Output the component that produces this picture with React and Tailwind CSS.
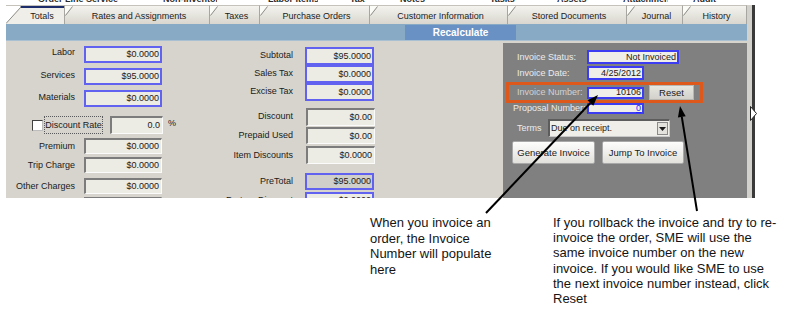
import React from "react";

const tabs = [
  { label: "Totals", w: "w-[59px]", first: true },
  { label: "Rates and Assignments", w: "w-[145px]" },
  { label: "Taxes", w: "w-[50px]" },
  { label: "Purchase Orders", w: "w-[110px]" },
  { label: "Customer Information", w: "w-[138px]" },
  { label: "Stored Documents", w: "w-[119px]" },
  { label: "Journal", w: "w-[56px]" },
  { label: "History", w: "w-[64px]" },
];

function DogEar({ first }) {
  if (first) {
    return (
      <svg className="absolute left-0 top-0" width="16" height="19" viewBox="0 0 16 19">
        <polygon points="0,0 15,0 0,17.5" fill="#ffffff" />
        <line x1="0" y1="17.5" x2="15" y2="1" stroke="#8e8c86" strokeWidth="1" />
      </svg>
    );
  }
  return (
    <svg className="absolute left-0 top-0" width="8" height="10" viewBox="0 0 8 10">
      <polygon points="0,0 7,0 0,9" fill="#fbfbf8" />
      <line x1="0.5" y1="9.5" x2="7.5" y2="0.5" stroke="#8e8c86" strokeWidth="1" />
    </svg>
  );
}

function BlueBox({ value, cls = "", bg = "bg-[#ecebe4]" }) {
  return (
    <div
      className={`${cls} ${bg} shrink-0 border-2 border-[#6262f0] flex items-center justify-end pr-[1px] text-[9px] leading-none text-[#1a1a1a]`}
    >
      {value}
    </div>
  );
}

function SunkenBox({ value, cls = "" }) {
  return (
    <div
      className={`${cls} shrink-0 bg-[#ecebe4] border-t-2 border-l-2 border-t-[#7c7c7c] border-l-[#7c7c7c] border-b border-r border-b-[#fbfbfb] border-r-[#fbfbfb] flex items-center justify-end pr-[2px] text-[9px] leading-none text-[#1a1a1a]`}
    >
      {value}
    </div>
  );
}

function PanelInput({ value, cls = "" }) {
  return (
    <div
      className={`${cls} shrink-0 bg-[#efeee8] border-2 border-[#3c3cf2] flex items-center justify-end pr-[1px] text-[9px] leading-none text-[#1a1a1a]`}
    >
      {value}
    </div>
  );
}

export default function App() {
  return (
    <div className="relative w-[800px] h-[323px] bg-white overflow-hidden font-['Liberation_Sans',Arial,sans-serif]">
      {/* clipped row of tabs above */}
      <div className="h-[5px] overflow-hidden flex text-[9px] text-[#2a2a2a] font-bold whitespace-nowrap">
        <span className="-mt-[7px] ml-[38px] w-[80px] overflow-hidden">Order Line Services</span>
        <span className="-mt-[7px] ml-[45px] w-[54px] overflow-hidden">Non-Inventory</span>
        <span className="-mt-[7px] ml-[51px] w-[50px] overflow-hidden">Labor Items</span>
        <span className="-mt-[7px] ml-[32px] w-[18px] overflow-hidden">Tax</span>
        <span className="-mt-[7px] ml-[32px] w-[37px] overflow-hidden">Notes</span>
        <span className="-mt-[7px] ml-[53px] w-[37px] overflow-hidden">Tasks</span>
        <span className="-mt-[7px] ml-[30px] w-[36px] overflow-hidden">Assets</span>
        <span className="-mt-[7px] ml-[30px] w-[45px] overflow-hidden">Attachment</span>
        <span className="-mt-[7px] ml-[25px] w-[37px] overflow-hidden">Audit</span>
      </div>

      {/* window */}
      <div className="flex h-[193px] pl-[6px]">
        <div className="w-[741px] flex flex-col">
          {/* tabs */}
          <div className="flex h-[19px] shrink-0">
            {tabs.map((t) => (
              <div
                key={t.label}
                className={`relative ${t.w} h-full shrink-0 border-r border-r-[#a8a6a0] border-t border-t-[#c4c2bb] ${
                  t.first ? "bg-[#efeee9] pl-[14px]" : "bg-linear-to-b from-[#f4f3ee] to-[#d8d6ce] pl-[4px]"
                } flex flex-col`}
              >
                <DogEar first={t.first} />
                {t.first ? (
                  <div className="h-[2px] bg-[#1d2c6b] shrink-0" />
                ) : (
                  <div className="h-[2px] shrink-0" />
                )}
                <div className="flex-1 flex items-center justify-center text-[9px] text-[#1c1c1c] leading-none">
                  {t.label}
                </div>
              </div>
            ))}
          </div>

          {/* blue bar */}
          <div className="h-[17px] shrink-0 bg-[#89aac5] border-b border-b-[#a9bfd2] flex items-start">
            <div className="ml-[399px] mt-[1px] w-[111px] h-[15px] bg-[#6a91c4] flex items-center justify-center text-[10px] font-bold text-white leading-none">
              Recalculate
            </div>
          </div>

          {/* content */}
          <div className="h-[157px] shrink-0 bg-[#d6d4cd] flex overflow-hidden">
            <div className="w-[497px] shrink-0 flex">
              {/* column 1 */}
              <div className="w-[170px] shrink-0 flex flex-col text-[9px] text-[#1a1a1a]">
                <div className="flex items-start mt-[5px]">
                  <div className="w-[69px] text-right leading-[12px]">Labor</div>
                  <BlueBox cls="ml-[9px] w-[78px] h-[17px]" value="$0.0000" />
                </div>
                <div className="flex items-start mt-[5px]">
                  <div className="w-[69px] text-right leading-[12px] mt-[1px]">Services</div>
                  <BlueBox cls="ml-[9px] w-[78px] h-[17px]" value="$95.0000" />
                </div>
                <div className="flex items-start mt-[5px]">
                  <div className="w-[69px] text-right leading-[12px] mt-[1px]">Materials</div>
                  <BlueBox cls="ml-[9px] w-[78px] h-[17px]" value="$0.0000" />
                </div>
                <div className="flex items-center mt-[9px] h-[18px]">
                  <div className="ml-[26px] w-[11px] h-[11px] bg-white border border-[#404040] border-b-[#bdbdbd] border-r-[#bdbdbd] shrink-0" />
                  <div className="ml-[1px] w-[59px] h-[18px] border border-dotted border-[#5a5a5a] flex items-center justify-center leading-none shrink-0">
                    Discount Rate
                  </div>
                  <SunkenBox cls="ml-[7px] w-[53px] h-[18px]" value="0.0" />
                  <div className="ml-[5px] leading-none -mt-[4px]">%</div>
                </div>
                <div className="flex items-center mt-[4px]">
                  <div className="w-[69px] text-right leading-[12px]">Premium</div>
                  <SunkenBox cls="ml-[9px] w-[78px] h-[16px]" value="$0.0000" />
                </div>
                <div className="flex items-center mt-[3px]">
                  <div className="w-[69px] text-right leading-[12px]">Trip Charge</div>
                  <SunkenBox cls="ml-[9px] w-[78px] h-[16px]" value="$0.0000" />
                </div>
                <div className="flex items-center mt-[5px]">
                  <div className="w-[69px] text-right leading-[12px]">Other Charges</div>
                  <SunkenBox cls="ml-[9px] w-[78px] h-[16px]" value="$0.0000" />
                </div>
                <div className="flex items-center mt-[3px]">
                  <div className="w-[69px] text-right leading-[12px]">Net Charges</div>
                  <SunkenBox cls="ml-[9px] w-[78px] h-[16px]" value="$0.0000" />
                </div>
              </div>

              {/* column 2 */}
              <div className="w-[210px] shrink-0 flex flex-col text-[9px] text-[#1a1a1a]">
                <div className="flex items-center mt-[6px]">
                  <div className="w-[117px] text-right leading-[12px] -mt-[2px]">Subtotal</div>
                  <BlueBox cls="ml-[12px] w-[69px] h-[18px]" value="$95.0000" />
                </div>
                <div className="flex items-center">
                  <div className="w-[117px] text-right leading-[12px] -mt-[2px]">Sales Tax</div>
                  <BlueBox cls="ml-[12px] w-[69px] h-[18px]" value="$0.0000" />
                </div>
                <div className="flex items-center">
                  <div className="w-[117px] text-right leading-[12px] -mt-[2px]">Excise Tax</div>
                  <BlueBox cls="ml-[12px] w-[69px] h-[18px]" value="$0.0000" />
                </div>
                <div className="flex items-center mt-[7px]">
                  <div className="w-[117px] text-right leading-[12px] -mt-[2px]">Discount</div>
                  <SunkenBox cls="ml-[13px] w-[69px] h-[18px]" value="$0.00" />
                </div>
                <div className="flex items-center mt-[1px]">
                  <div className="w-[117px] text-right leading-[12px] -mt-[2px]">Prepaid Used</div>
                  <SunkenBox cls="ml-[13px] w-[69px] h-[17px]" value="$0.00" />
                </div>
                <div className="flex items-center mt-[2px]">
                  <div className="w-[117px] text-right leading-[12px]">Item Discounts</div>
                  <SunkenBox cls="ml-[13px] w-[69px] h-[18px]" value="$0.0000" />
                </div>
                <div className="flex items-center mt-[9px]">
                  <div className="w-[117px] text-right leading-[12px] -mt-[2px]">PreTotal</div>
                  <BlueBox cls="ml-[12px] w-[69px] h-[17px]" bg="bg-[#d0cfc9]" value="$95.0000" />
                </div>
                <div className="flex items-center mt-[2px]">
                  <div className="w-[117px] text-right leading-[12px] -mt-[2px]">Partner Discount</div>
                  <BlueBox cls="ml-[12px] w-[69px] h-[17px]" value="$0.0000" />
                </div>
              </div>
            </div>

            {/* right panel */}
            <div className="w-[244px] shrink-0 mt-[2px] bg-[#808080] flex flex-col text-[9px] text-[#ececec]">
              <div className="flex items-center mt-[7px] h-[14px]">
                <div className="ml-[14px] w-[70px] leading-none">Invoice Status:</div>
                <PanelInput cls="w-[92px] h-[14px]" value="Not Invoiced" />
              </div>
              <div className="flex items-center mt-[2px] h-[14px]">
                <div className="ml-[14px] w-[70px] leading-none">Invoice Date:</div>
                <PanelInput cls="w-[57px] h-[14px]" value="4/25/2012" />
              </div>
              <div className="ml-[3px] mt-[2px] w-[197px] h-[21px] border-[3px] border-[#df581b] flex items-center">
                <div className="ml-[8px] w-[70px] leading-none text-[#d2d2d2]">Invoice Number:</div>
                <PanelInput cls="w-[57px] h-[12px]" value="10106" />
                <div className="ml-[5px] w-[45px] h-[15px] bg-linear-to-b from-[#e6e5df] to-[#d3d1ca] border border-[#b8b6b0] flex items-center justify-center text-[9.5px] text-[#1a1a1a] leading-none shrink-0">
                  Reset
                </div>
              </div>
              <div className="flex items-center h-[11px]">
                <div className="ml-[10px] w-[74px] leading-none whitespace-nowrap overflow-hidden">Proposal Number:</div>
                <div className="w-[57px] h-[11px] shrink-0 bg-[#efeee8] border-2 border-[#3c3cf2] flex items-center justify-end pr-[1px] text-[9px] leading-none text-[#2323ff] underline">
                  0
                </div>
              </div>
              <div className="flex items-center mt-[5px] h-[18px]">
                <div className="ml-[14px] w-[31px] leading-none">Terms</div>
                <div className="w-[122px] h-[18px] shrink-0 bg-[#efeee8] border-t-2 border-l-2 border-t-[#5c5c5c] border-l-[#5c5c5c] border-b border-r border-b-[#c8c8c8] border-r-[#c8c8c8] flex items-center">
                  <div className="flex-1 pl-[1px] text-[9px] leading-none text-[#1a1a1a]">Due on receipt.</div>
                  <div className="w-[11px] h-[13px] mr-[1px] bg-[#e4e2dc] border border-[#8a8a8a] flex items-center justify-center shrink-0">
                    <svg width="7" height="4" viewBox="0 0 7 4">
                      <polygon points="0,0 7,0 3.5,4" fill="#1a1a1a" />
                    </svg>
                  </div>
                </div>
              </div>
              <div className="flex mt-[4px] h-[23px]">
                <div className="ml-[9px] w-[83px] h-[23px] rounded-[2px] bg-linear-to-b from-[#fdfdfc] to-[#e2e1dc] border border-[#a8a8a8] flex items-center justify-center text-[9.5px] text-[#1a1a1a] leading-none shrink-0">
                  Generate Invoice
                </div>
                <div className="ml-[7px] w-[82px] h-[23px] rounded-[2px] bg-linear-to-b from-[#fdfdfc] to-[#e2e1dc] border border-[#a8a8a8] flex items-center justify-center text-[9.5px] text-[#1a1a1a] leading-none shrink-0">
                  Jump To Invoice
                </div>
              </div>
            </div>
          </div>
        </div>
        {/* right frame edge */}
        <div className="w-[5px] shrink-0 bg-[#d3d1cb]" />
        <div className="w-[3px] shrink-0 bg-[#3a3a3a]" />
      </div>

      {/* annotations */}
      <div className="flex pt-[17px] text-[13px] text-[#141414]">
        <div className="ml-[370px] w-[140px] leading-[15.5px]">
          When you invoice an
          <br />
          order, the Invoice
          <br />
          Number will populate
          <br />
          here
        </div>
        <div className="ml-[43px] w-[240px] leading-[15.2px]">
          If you rollback the invoice and try to re-
          <br />
          invoice the order, SME will use the
          <br />
          same invoice number on the new
          <br />
          invoice. If you would like SME to use
          <br />
          the next invoice number instead, click
          <br />
          Reset
        </div>
      </div>

      {/* arrows and mouse cursor overlay */}
      <svg className="absolute left-0 top-0 pointer-events-none" width="800" height="323" viewBox="0 0 800 323">
        <line x1="486" y1="213" x2="590.4" y2="103" stroke="#000" strokeWidth="2" />
        <polygon points="598,95 593.3,105.7 587.5,100.2" fill="#000" />
        <line x1="697" y1="211" x2="681.8" y2="116.9" stroke="#000" strokeWidth="2" />
        <polygon points="680,106 685.7,116.2 677.9,117.5" fill="#000" />
        <polygon points="750.5,106.5 756.5,113.5 750.5,120.5" fill="#ffffff" stroke="#222" strokeWidth="1" />
      </svg>
    </div>
  );
}
